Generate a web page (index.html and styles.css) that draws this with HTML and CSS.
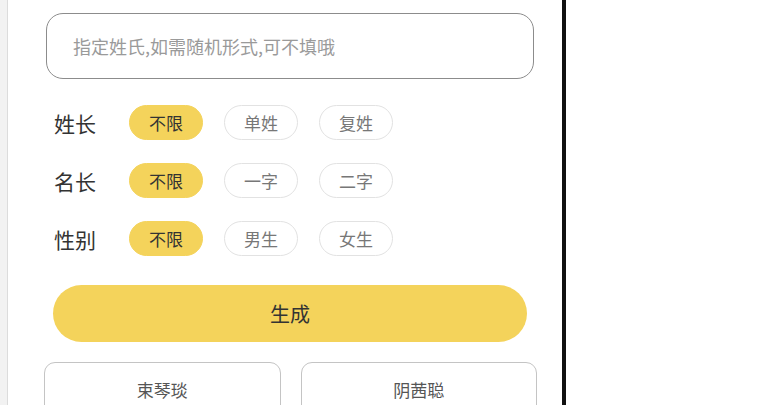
FILE: index.html
```html
<!DOCTYPE html>
<html lang="zh">
<head>
<meta charset="utf-8">
<link rel="stylesheet" href="styles.css">
</head>
<body>
<div class="app">
  <div class="side"></div>
  <main class="panel">
    <div class="input-box">
      <input class="surname" type="text" placeholder="指定姓氏,如需随机形式,可不填哦">
    </div>
    <div class="opt-row first">
      <span class="opt-label">姓长</span>
      <span class="chip active">不限</span>
      <span class="chip">单姓</span>
      <span class="chip">复姓</span>
    </div>
    <div class="opt-row">
      <span class="opt-label">名长</span>
      <span class="chip active">不限</span>
      <span class="chip">一字</span>
      <span class="chip">二字</span>
    </div>
    <div class="opt-row">
      <span class="opt-label">性别</span>
      <span class="chip active">不限</span>
      <span class="chip">男生</span>
      <span class="chip">女生</span>
    </div>
    <button class="gen-btn">生成</button>
    <div class="results">
      <div class="name-card">束琴琰</div>
      <div class="name-card">阴茜聪</div>
    </div>
  </main>
  <div class="divider"></div>
  <div class="blank"></div>
</div>
</body>
</html>
```

FILE: styles.css
```css
* { box-sizing: border-box; }
html, body {
  margin: 0;
  padding: 0;
  background: #fff;
  font-family: "Noto Sans CJK SC", "Noto Sans", sans-serif;
  overflow: hidden;
}
.app {
  display: flex;
  height: 405px;
}
.side {
  width: 8px;
  background: #f2f2f2;
  border-right: 1px solid #dcdcdc;
  flex: none;
}
.panel {
  width: 554px;
  flex: none;
  padding: 13px 28px 0 38px;
  display: flex;
  flex-direction: column;
  overflow: hidden;
}
.panel > * { flex: none; }
.divider {
  width: 4px;
  background: #111;
  flex: none;
}
.blank { flex: 1; background: #fff; }

.input-box {
  height: 66px;
  border: 1px solid #8c8c8c;
  border-radius: 17px;
  display: flex;
  align-items: center;
  padding: 0 26px;
}
.surname {
  border: none;
  outline: none;
  width: 100%;
  font-family: inherit;
  font-size: 18px;
  color: #333;
  background: transparent;
  padding: 0;
}
.surname::placeholder { color: #9a9a9a; }

.opt-row {
  display: flex;
  align-items: center;
  height: 35px;
  margin-top: 23px;
  padding-left: 8px;
}
.opt-row.first { margin-top: 26px; }
.opt-label {
  width: 75px;
  font-size: 21px;
  color: #333;
}
.chip {
  width: 74px;
  height: 35px;
  border-radius: 18px;
  border: 1px solid #e2e2e2;
  display: flex;
  align-items: center;
  justify-content: center;
  font-size: 17px;
  color: #777;
  margin-right: 21px;
}
.chip.active {
  background: #f4d35b;
  border-color: #f4d35b;
  color: #333;
}

.gen-btn {
  margin: 29px 7px 0;
  height: 57px;
  border: none;
  border-radius: 29px;
  background: #f4d35b;
  font-family: inherit;
  font-size: 20px;
  color: #333;
}

.results {
  display: flex;
  gap: 20px;
  margin: 20px -3px 0 -2px;
}
.name-card {
  flex: 1;
  height: 60px;
  border: 1px solid #c4c4c4;
  border-radius: 11px;
  font-size: 17px;
  color: #555;
  text-align: center;
  padding-top: 14px;
}
```
